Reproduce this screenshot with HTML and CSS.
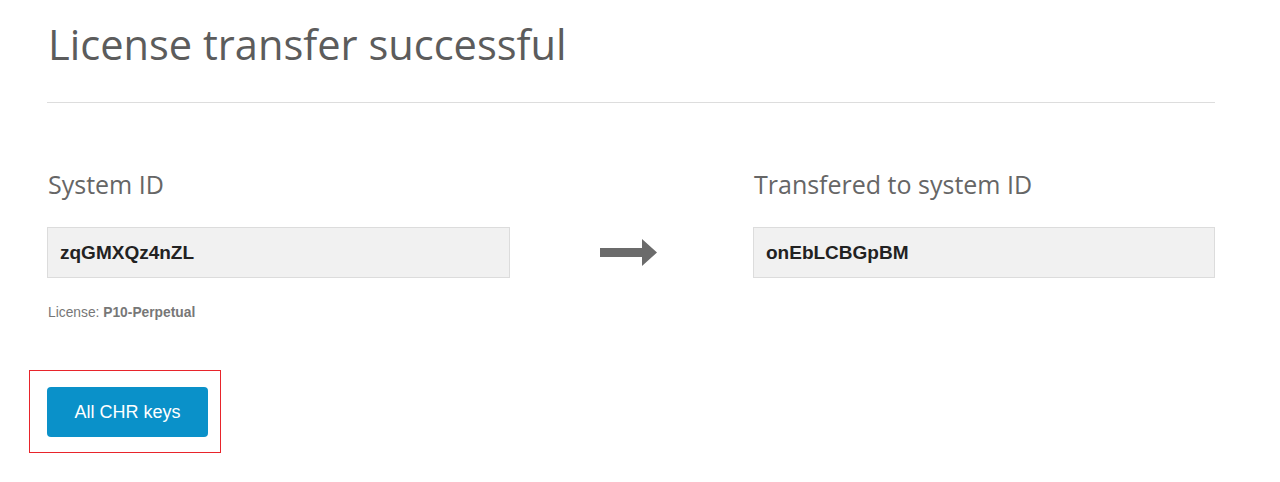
FILE: index.html
```html
<!DOCTYPE html>
<html lang="en">
<head>
<meta charset="utf-8">
<title>License transfer successful</title>
<link rel="stylesheet" href="styles.css">
</head>
<body>
<main class="page">
  <h1 class="title">License transfer successful</h1>
  <hr class="divider">
  <section class="transfer">
    <div class="col">
      <h2 class="label">System ID</h2>
      <div class="id-box">zqGMXQz4nZL</div>
      <p class="license">License: <strong>P10-Perpetual</strong></p>
    </div>
    <div class="arrow-col">
      <svg class="arrow" width="57" height="27" viewBox="0 0 57 27" aria-hidden="true">
        <polygon points="0,9 42,9 42,0 57,13.5 42,27 42,18 0,18" fill="#6b6b6b"/>
      </svg>
    </div>
    <div class="col">
      <h2 class="label">Transfered to system ID</h2>
      <div class="id-box">onEbLCBGpBM</div>
    </div>
  </section>
  <div class="actions">
    <a class="btn" href="#">All CHR keys</a>
  </div>
</main>
</body>
</html>
```

FILE: styles.css
```css
html, body {
  margin: 0;
  padding: 0;
  background: #ffffff;
}

.page {
  width: 1168px;
  margin-left: 47px;
  padding-top: 19px;
}

.title {
  margin: 0;
  font-family: "Open Sans", "Noto Sans", sans-serif;
  font-weight: 400;
  font-size: 41.6px;
  line-height: 50px;
  color: #5c5c5c;
  padding-left: 1px;
}

.divider {
  margin: 33px 0 0 0;
  border: 0;
  border-top: 1px solid #dddddd;
  height: 0;
}

.transfer {
  display: grid;
  grid-template-columns: 463px 1fr 462px;
  margin-top: 64px;
}

.col {
  display: flex;
  flex-direction: column;
}

.label {
  margin: 0;
  font-family: "Open Sans", "Noto Sans", sans-serif;
  font-weight: 400;
  font-size: 25px;
  line-height: 34px;
  color: #666666;
  padding-left: 1px;
}

.id-box {
  margin-top: 26px;
  box-sizing: border-box;
  height: 51px;
  border: 1px solid #dcdcdc;
  background: #f1f1f1;
  display: flex;
  align-items: center;
  padding-left: 12px;
  font-family: "Liberation Sans", Arial, sans-serif;
  font-weight: 700;
  font-size: 19px;
  color: #222222;
}

.license {
  margin: 27px 0 0 0;
  font-family: "Liberation Sans", Arial, sans-serif;
  font-size: 13.8px;
  line-height: 16px;
  color: #777777;
  padding-left: 1px;
}

.license strong {
  font-weight: 700;
}

.arrow-col {
  display: flex;
  justify-content: center;
  padding-top: 72px;
  padding-right: 6px;
}

.arrow {
  display: block;
}

.actions {
  margin-top: 49px;
  margin-left: -18px;
  width: 192px;
  height: 83px;
  box-sizing: border-box;
  border: 1.5px solid #e8242b;
  padding: 16px 0 0 17px;
}

.btn {
  display: inline-flex;
  align-items: center;
  justify-content: center;
  width: 161px;
  height: 50px;
  border-radius: 4px;
  background: #0a91c9;
  color: #ffffff;
  text-decoration: none;
  font-family: "Liberation Sans", Arial, sans-serif;
  font-size: 18px;
}
```
